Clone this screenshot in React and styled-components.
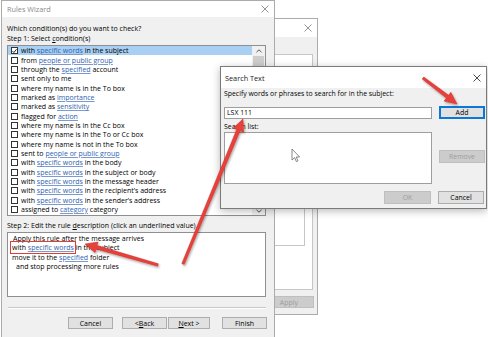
import React from 'react'
import styled, { createGlobalStyle } from 'styled-components'

const GlobalStyle = createGlobalStyle`
  html, body {
    margin: 0;
    padding: 0;
    background: #fff;
  }
  body {
    font-family: "Open Sans", "Noto Sans", sans-serif;
    font-size: 7px;
    color: #000;
    overflow: hidden;
  }
`

const Desktop = styled.div`
  position: relative;
  width: 488px;
  height: 337px;
  overflow: hidden;
  background: #fff;
`

const Window = styled.div`
  position: absolute;
  left: ${({ $x }) => $x}px;
  top: ${({ $y }) => $y}px;
  width: ${({ $w }) => $w}px;
  height: ${({ $h }) => $h}px;
  box-sizing: border-box;
  display: flex;
  flex-direction: column;
  background: #f0f0f0;
  border: 1px solid ${({ $active }) => ($active ? '#7a7a7a' : '#ababab')};
  box-shadow: ${({ $active }) => ($active ? '0 2px 8px rgba(0,0,0,0.28)' : 'none')};
  font-size: ${({ $fs }) => $fs || 7}px;
`

const TitleBar = styled.div`
  height: ${({ $h }) => $h}px;
  flex: none;
  background: #fff;
  display: flex;
  align-items: center;
  justify-content: space-between;
  padding: 0 5px 0 ${({ $pl }) => $pl || 5}px;
  color: ${({ $active }) => ($active ? '#222' : '#8a8a8a')};
  font-size: 7.3px;
`

const Body = styled.div`
  flex: 1;
  display: flex;
  flex-direction: column;
  padding: ${({ $pad }) => $pad};
  min-height: 0;
`

const Line = styled.div`
  line-height: 10px;
  height: 10px;
  white-space: nowrap;
  margin-top: ${({ $mt }) => $mt || 0}px;
`

const U = styled.span`
  text-decoration: underline;
  text-underline-offset: 1px;
`

const Link = styled.span`
  color: #2f63b0;
  text-decoration: underline;
  text-decoration-color: #7a9ad0;
  text-underline-offset: 1px;
`

const ListBox = styled.div`
  height: ${({ $h }) => $h}px;
  margin-top: ${({ $mt }) => $mt || 0}px;
  box-sizing: border-box;
  background: #fff;
  border: 1px solid #8e8f94;
  display: flex;
  flex: none;
  overflow: hidden;
`

const Rows = styled.div`
  flex: 1;
  display: flex;
  flex-direction: column;
`

const Row = styled.div`
  height: 9.35px;
  flex: none;
  display: flex;
  align-items: center;
  gap: 3px;
  padding-left: 3px;
  white-space: nowrap;
  background: ${({ $selected }) => ($selected ? '#a9d0f3' : 'transparent')};
`

const Box = styled.span`
  width: 7px;
  height: 7px;
  box-sizing: border-box;
  border: 1px solid #333;
  background: #fff;
  flex: none;
  display: flex;
  align-items: center;
  justify-content: center;
`

const ScrollBar = styled.div`
  width: 13px;
  flex: none;
  display: flex;
  flex-direction: column;
  background: #f0f0f0;
`

const ScrollArrow = styled.div`
  height: 9px;
  flex: none;
  display: flex;
  align-items: center;
  justify-content: center;
`

const Track = styled.div`
  flex: 1;
  padding: 1px 1px 0;
`

const Thumb = styled.div`
  height: 11px;
  background: #cdcdcd;
`

const Desc = styled.div`
  height: 65px;
  margin-top: 1px;
  box-sizing: border-box;
  background: #fff;
  border: 1px solid #8e8f94;
  padding: 1px 5px 0 4px;
  line-height: 9.3px;
  flex: none;
`

const DescLine = styled.div`
  white-space: nowrap;
  padding-left: ${({ $indent }) => $indent || 0}px;
`

const Marked = styled.span`
  outline: 1.4px solid #e23c36;
  outline-offset: 1px;
`

const Separator = styled.div`
  height: 0;
  margin: ${({ $m }) => $m};
  border-top: 1px solid #c9c9c9;
  border-bottom: 1px solid #fff;
`

const ButtonRow = styled.div`
  display: flex;
  align-items: ${({ $top }) => ($top ? 'flex-start' : 'center')};
  justify-content: ${({ $end }) => ($end ? 'flex-end' : 'flex-start')};
  gap: ${({ $gap }) => $gap || 0}px;
  margin-top: ${({ $mt }) => $mt || 0}px;
  margin-right: ${({ $mr }) => $mr || 0}px;
`

const Button = styled.div`
  width: ${({ $w }) => $w}px;
  height: ${({ $h }) => $h || 12}px;
  margin-left: ${({ $ml }) => $ml || 0}px;
  margin-top: ${({ $mt }) => $mt || 0}px;
  flex: none;
  box-sizing: border-box;
  display: flex;
  align-items: center;
  justify-content: center;
  background: ${({ $disabled }) => ($disabled ? '#cccccc' : '#e1e1e1')};
  color: ${({ $disabled }) => ($disabled ? '#9c9c9c' : '#000')};
  border: 1px solid ${({ $focus, $disabled }) => ($focus ? '#0a78d6' : $disabled ? '#bfbfbf' : '#adadad')};
  box-shadow: ${({ $focus }) => ($focus ? 'inset 0 0 0 1px #0a78d6' : 'none')};
`

const Input = styled.div`
  width: 208px;
  height: 12px;
  flex: none;
  box-sizing: border-box;
  background: #fff;
  border: 1px solid #9e9e9e;
  display: flex;
  align-items: center;
  padding-left: 2px;
`

const PlainBox = styled.div`
  width: ${({ $w }) => $w}px;
  height: ${({ $h }) => $h}px;
  flex: none;
  box-sizing: border-box;
  background: #fff;
  border: 1px solid ${({ $c }) => $c || '#a6a6a6'};
  margin-left: ${({ $right }) => ($right ? 'auto' : '0')};
`

const InnerBox = styled.div`
  margin: 14px 7px 0 auto;
  width: 120px;
  height: 176px;
  border-right: 1px solid #c6c6c6;
  border-bottom: 1px solid #c6c6c6;
`

const Overlay = styled.svg`
  position: absolute;
  left: 0;
  top: 0;
  pointer-events: none;
`

const Close = ({ color = '#333' }) => (
  <svg width="8" height="8" viewBox="0 0 8 8">
    <path d="M0.5 0.5 L7.5 7.5 M7.5 0.5 L0.5 7.5" stroke={color} strokeWidth="0.9" />
  </svg>
)

const Check = () => (
  <svg width="6" height="6" viewBox="0 0 6 6">
    <path d="M0.6 3.1 L2.3 4.8 L5.4 0.9" fill="none" stroke="#111" strokeWidth="1.1" />
  </svg>
)

const Chevron = ({ down }) => (
  <svg width="6" height="4" viewBox="0 0 6 4">
    <path d={down ? 'M0.5 0.8 L3 3.2 L5.5 0.8' : 'M0.5 3.2 L3 0.8 L5.5 3.2'} fill="none" stroke="#555" strokeWidth="1" />
  </svg>
)

const conditions = [
  ['with ', 'specific words', ' in the subject'],
  ['from ', 'people or public group', ''],
  ['through the ', 'specified', ' account'],
  ['sent only to me'],
  ['where my name is in the To box'],
  ['marked as ', 'importance', ''],
  ['marked as ', 'sensitivity', ''],
  ['flagged for ', 'action', ''],
  ['where my name is in the Cc box'],
  ['where my name is in the To or Cc box'],
  ['where my name is not in the To box'],
  ['sent to ', 'people or public group', ''],
  ['with ', 'specific words', ' in the body'],
  ['with ', 'specific words', ' in the subject or body'],
  ['with ', 'specific words', ' in the message header'],
  ['with ', 'specific words', ' in the recipient\u2019s address'],
  ['with ', 'specific words', ' in the sender\u2019s address'],
  ['assigned to ', 'category', ' category'],
]

const arrows = [
  { from: [158, 265], to: [85, 244] },
  { from: [183, 264], to: [243, 119] },
  { from: [423, 78], to: [457, 104] },
]

const arrowPoints = ({ from, to }) => {
  const [x1, y1] = from
  const [x2, y2] = to
  const len = Math.hypot(x2 - x1, y2 - y1)
  const ux = (x2 - x1) / len
  const uy = (y2 - y1) / len
  const nx = -uy
  const ny = ux
  const head = 12
  const hw = 5.5
  const sw = 1.8
  const bx = x2 - ux * head
  const by = y2 - uy * head
  const pts = [
    [x1 + nx * sw * 0.7, y1 + ny * sw * 0.7],
    [bx + nx * sw, by + ny * sw],
    [bx + nx * hw, by + ny * hw],
    [x2, y2],
    [bx - nx * hw, by - ny * hw],
    [bx - nx * sw, by - ny * sw],
    [x1 - nx * sw * 0.7, y1 - ny * sw * 0.7],
  ]
  return pts.map((p) => p.map((v) => v.toFixed(1)).join(',')).join(' ')
}

const Annotations = () => (
  <Overlay width="488" height="337" viewBox="0 0 488 337">
    <defs>
      <filter id="arrowShadow" x="-20%" y="-20%" width="140%" height="140%">
        <feDropShadow dx="1" dy="1.5" stdDeviation="1.2" floodColor="#000" floodOpacity="0.35" />
      </filter>
    </defs>
    {arrows.map((a, i) => (
      <polygon key={i} points={arrowPoints(a)} fill="#e8413b" stroke="#c92a25" strokeWidth="0.5" filter="url(#arrowShadow)" />
    ))}
    <path
      d="M292 149 L292 160 L294.6 157.6 L296.4 161.6 L298 160.9 L296.2 157 L299.6 157 Z"
      fill="#fff"
      stroke="#6a6a6a"
      strokeWidth="0.8"
    />
  </Overlay>
)

const BackWindow = () => (
  <Window $x={150} $y={18} $w={168} $h={297}>
    <TitleBar $h={18}>
      <span />
      <Close color="#8a8a8a" />
    </TitleBar>
    <Body $pad="17px 5px 4px 0">
      <PlainBox $w={162} $h={236} $c="#c6c6c6" $right>
        <InnerBox />
      </PlainBox>
      <ButtonRow $end $mt={6} $mr={-2}>
        <Button $w={50} $disabled>Apply</Button>
      </ButtonRow>
    </Body>
  </Window>
)

const RulesWizard = () => (
  <Window $x={1} $y={0} $w={274} $h={345}>
    <TitleBar $h={16} $pl={5}>
      <span>Rules Wizard</span>
      <Close color="#8a8a8a" />
    </TitleBar>
    <Body $pad="7px 8px 0 5px">
      <Line>Which condition(s) do you want to check?</Line>
      <Line>Step 1: Select <U>c</U>ondition(s)</Line>
      <ListBox $h={171} $mt={1}>
        <Rows>
          {conditions.map(([a, link, b], i) => (
            <Row key={i} $selected={i === 0}>
              <Box>{i === 0 && <Check />}</Box>
              <span>
                {a}
                {link && <Link>{link}</Link>}
                {b}
              </span>
            </Row>
          ))}
        </Rows>
        <ScrollBar>
          <ScrollArrow>
            <Chevron />
          </ScrollArrow>
          <Track>
            <Thumb />
          </Track>
          <ScrollArrow>
            <Chevron down />
          </ScrollArrow>
        </ScrollBar>
      </ListBox>
      <Line $mt={5}>
        Step 2: Edit the rule <U>d</U>escription (click an underlined value)
      </Line>
      <Desc>
        <DescLine $indent={1}>Apply this rule after the message arrives</DescLine>
        <DescLine>
          <Marked>
            with <Link>specific words</Link>
          </Marked>{' '}
          in the subject
        </DescLine>
        <DescLine>
          move it to the <Link>specified</Link> folder
        </DescLine>
        <DescLine $indent={4}>and stop processing more rules</DescLine>
      </Desc>
      <Separator $m="10px 0 0 1px" />
      <ButtonRow $mt={8}>
        <Button $w={45} $ml={61}>Cancel</Button>
        <Button $w={45} $ml={9}>
          &lt; <U>B</U>ack
        </Button>
        <Button $w={42} $ml={1}>
          <U>N</U>ext &gt;
        </Button>
        <Button $w={45} $ml={12}>Finish</Button>
      </ButtonRow>
    </Body>
  </Window>
)

const SearchDialog = () => (
  <Window $x={220} $y={66} $w={267} $h={143} $fs={6.9} $active>
    <TitleBar $h={21} $pl={4} $active>
      <span>Search Text</span>
      <Close color="#333" />
    </TitleBar>
    <Body $pad="1px 2px 0 3px">
      <Line>Specify words or phrases to search for in the subject:</Line>
      <ButtonRow $gap={7} $mt={7}>
        <Input>LSX 111</Input>
        <Button $w={46} $h={13} $focus>Add</Button>
      </ButtonRow>
      <Line $mt={3}>Search list:</Line>
      <ButtonRow $gap={7} $top>
        <PlainBox $w={208} $h={52} $c="#9e9e9e" />
        <Button $w={46} $h={13} $mt={18} $disabled>Remove</Button>
      </ButtonRow>
      <ButtonRow $end $gap={7} $mt={7}>
        <Button $w={47} $h={13} $disabled>OK</Button>
        <Button $w={46} $h={13}>Cancel</Button>
      </ButtonRow>
    </Body>
  </Window>
)

const App = () => (
  <>
    <GlobalStyle />
    <Desktop>
      <BackWindow />
      <RulesWizard />
      <SearchDialog />
      <Annotations />
    </Desktop>
  </>
)

export default App
